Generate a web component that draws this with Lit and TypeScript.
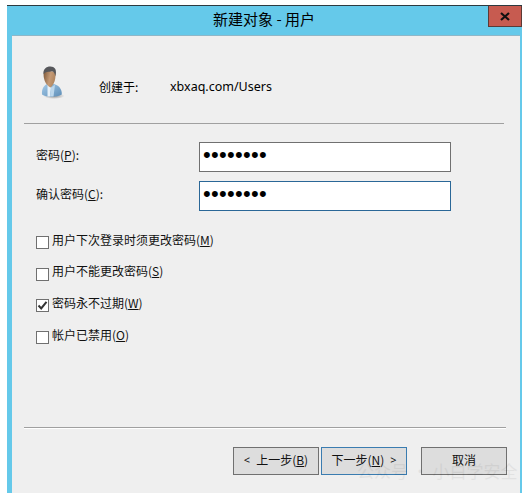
import { LitElement, html, css } from "lit";
import { customElement } from "lit/decorators.js";

const PW = "••••••••";

@customElement("app-root")
export class AppRoot extends LitElement {
  static styles = css`
    :host {
      display: block;
      width: 530px;
      height: 493px;
      position: relative;
      overflow: hidden;
      background: #fff;
      font-family: "Noto Sans", "Noto Sans CJK SC", sans-serif;
      font-size: 12px;
      color: #000;
    }
    .window {
      box-sizing: border-box;
      margin: 5px 0 0 7px;
      width: 515px;
      height: 488px;
      background: #65c9ea;
      border-top: 1px solid #2c3a40;
      padding: 0 2px 0 5px;
      display: flex;
      flex-direction: column;
    }
    .titlebar {
      height: 29px;
      flex: none;
      display: flex;
      align-items: center;
      justify-content: center;
      position: relative;
      font-size: 15px;
      padding: 0 4px 4px 0;
      box-sizing: border-box;
      font-family: "Noto Sans CJK SC", sans-serif;
    }
    .close {
      position: absolute;
      right: -2px;
      top: 0;
      width: 34px;
      height: 21px;
      box-sizing: border-box;
      background: #c75b50;
      border: 1px solid #5c3a36;
      border-top: none;
      display: flex;
      align-items: center;
      justify-content: center;
    }
    .client {
      flex: 1;
      background: #efefef;
      border-top: 1px solid #8fb7c8;
      display: flex;
      flex-direction: column;
      padding: 0 0 0 12px;
    }
    .head {
      height: 87px;
      flex: none;
      display: flex;
      align-items: center;
      box-sizing: border-box;
      padding: 13px 0 0 17px;
    }
    .avatar { width: 26px; height: 34px; flex: none; margin-bottom: 6px; }
    .created { margin-left: 32px; width: 71px; flex: none; font-family: "Noto Sans CJK SC", sans-serif; }
    .path { font-size: 12.5px; }
    .sep {
      flex: none;
      height: 1px;
      background: #a0a0a0;
      width: 480px;
    }
    .sep.bottom {
      width: 482px;
      box-shadow: 0 1px 0 #fff;
    }
    .form {
      display: grid;
      grid-template-columns: 163px 252px;
      grid-auto-rows: 30px;
      row-gap: 9px;
      padding: 18px 0 0 12px;
      align-items: center;
      font-family: "Noto Sans CJK SC", sans-serif;
    }
    .form label { color: #111; margin-top: -5px; }
    .field {
      box-sizing: border-box;
      height: 30px;
      background: #fff;
      border: 1px solid #707070;
      font-family: "Liberation Sans", sans-serif;
      font-size: 22px;
      line-height: 24px;
      letter-spacing: 0.3px;
      padding: 0 0 0 3px;
    }
    .field.focus { border-color: #2a6797; }
    .checks {
      display: flex;
      flex-direction: column;
      gap: 11.7px;
      padding: 19px 0 0 12px;
      flex: none;
      height: 216px;
      box-sizing: border-box;
      font-family: "Noto Sans CJK SC", sans-serif;
    }
    .check {
      display: flex;
      align-items: center;
      height: 20px;
      gap: 3px;
      color: #111;
    }
    .box {
      box-sizing: border-box;
      width: 13px;
      height: 13px;
      flex: none;
      background: #fff;
      border: 1px solid #707070;
      margin-top: 5px;
      display: block;
    }
    .tick { display: block; }
    .check span { margin-top: -2px; }
    .buttons {
      flex: 1;
      display: flex;
      padding: 19px 0 0 209px;
      box-sizing: border-box;
      font-family: "Noto Sans CJK SC", sans-serif;
    }
    .btn {
      box-sizing: border-box;
      width: 86px;
      height: 28px;
      background: #dddddd;
      border: 1px solid #707070;
      display: flex;
      align-items: center;
      justify-content: center;
      color: #111;
      padding-bottom: 3px;
    }
    .btn.primary { border-color: #3a7cb0; margin-left: 2px; }
    .btn.cancel { margin-left: 14px; }
    .lt { font-family: "Noto Sans", sans-serif; margin-right: 6px; font-size: 11px; }
    .gt { font-family: "Noto Sans", sans-serif; margin-left: 6px; font-size: 11px; }
    .watermark {
      position: absolute;
      left: 357px;
      top: 458px;
      font-size: 17px;
      color: #000;
      opacity: 0.05;
      white-space: nowrap;
      font-family: "Noto Sans CJK SC", sans-serif;
    }
  `;

  private avatar() {
    return html`<svg class="avatar" viewBox="0 0 26 34">
      <defs>
        <linearGradient id="skin" x1="0" y1="0" x2="1" y2="0.3">
          <stop offset="0" stop-color="#7a5638" />
          <stop offset="0.6" stop-color="#c59a75" />
          <stop offset="1" stop-color="#b08660" />
        </linearGradient>
        <linearGradient id="shirt" x1="0" y1="0" x2="1" y2="1">
          <stop offset="0" stop-color="#a5cbea" />
          <stop offset="1" stop-color="#5d8db6" />
        </linearGradient>
        <radialGradient id="shade" cx="0.5" cy="0.5" r="0.5">
          <stop offset="0" stop-color="#8f8f8f" />
          <stop offset="1" stop-color="#efefef" />
        </radialGradient>
      </defs>
      <ellipse cx="13" cy="30" rx="10.5" ry="3" fill="url(#shade)" />
      <path d="M1 28.5 C0.5 23 2.5 19.5 7 17.5 L13 18 C18 19.5 21 23 20.8 28.5 C16 31.5 5 31.5 1 28.5 Z" fill="url(#shirt)" />
      <path d="M6.5 18.5 L10 21.5 L9 30.6 L6.5 30.4 Z" fill="#e6f0f8" />
      <path d="M10 21.5 L14 18.8 L12.5 30.6 L9 30.6 Z" fill="#bcd7ec" />
      <path d="M2.6 8 C2.4 13 4.5 19 9.5 21.5 C12 19.5 13.8 16 14.3 12 L14.7 6 L3 4 Z" fill="url(#skin)" />
      <path d="M2.6 8.5 C1.8 3 5.5 0.5 9.5 0.6 C13.5 0.7 15.6 3.5 14.8 8 L14.2 10.5 C14 7.5 13 5.8 11 5.3 C7.5 6.2 4 5.5 2.6 8.5 Z" fill="#56575b" />
    </svg>`;
  }

  render() {
    return html`
      <div class="window">
        <div class="titlebar">
          新建对象 - 用户
          <div class="close">
            <svg width="10" height="9" viewBox="0 0 10 9">
              <path d="M1 1 L9 8 M9 1 L1 8" stroke="#111" stroke-width="2.2" fill="none" />
            </svg>
          </div>
        </div>
        <div class="client">
          <div class="head">
            ${this.avatar()}
            <div class="created">创建于:</div>
            <div class="path">xbxaq.com/Users</div>
          </div>
          <div class="sep"></div>
          <div class="form">
            <label>密码(<u>P</u>):</label>
            <div class="field">${PW}</div>
            <label>确认密码(<u>C</u>):</label>
            <div class="field focus">${PW}</div>
          </div>
          <div class="checks">
            <div class="check"><i class="box"></i><span>用户下次登录时须更改密码(<u>M</u>)</span></div>
            <div class="check"><i class="box"></i><span>用户不能更改密码(<u>S</u>)</span></div>
            <div class="check">
              <i class="box">
                <svg class="tick" width="11" height="11" viewBox="0 0 11 11">
                  <path d="M1.5 5.5 L4.2 8.4 L9.5 1.8" stroke="#333" stroke-width="2" fill="none" />
                </svg>
              </i>
              <span>密码永不过期(<u>W</u>)</span>
            </div>
            <div class="check"><i class="box"></i><span>帐户已禁用(<u>O</u>)</span></div>
          </div>
          <div class="sep bottom"></div>
          <div class="buttons">
            <div class="btn"><span class="lt">&lt;</span>上一步(<u>B</u>)</div>
            <div class="btn primary">下一步(<u>N</u>)<span class="gt">&gt;</span></div>
            <div class="btn cancel">取消</div>
          </div>
        </div>
      </div>
      <div class="watermark">公众号 · 小白学安全</div>
    `;
  }
}
